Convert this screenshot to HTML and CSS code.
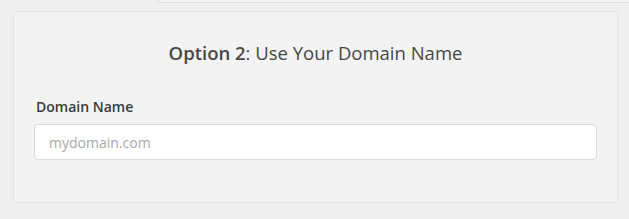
FILE: index.html
```html
<!DOCTYPE html>
<html>
<head>
<meta charset="UTF-8">
<meta name="viewport" content="width=device-width, initial-scale=1.0">
<title>Use Your Domain</title>
<link rel="stylesheet" href="styles.css">
</head>
<body>
<div class="prev-box"></div>
<div class="option-card">
  <h3 class="option-title"><strong>Option 2</strong>: Use Your Domain Name</h3>
  <div class="input-group">
    <label for="domain">Domain Name</label>
    <input type="text" id="domain" name="domain" placeholder="mydomain.com">
  </div>
</div>
</body>
</html>
```

FILE: styles.css
```css
body {
  font-family: "Open Sans", "Noto Sans", sans-serif;
  background-color: #efefef;
  margin: 0;
  padding: 0;
  color: #444;
}

.prev-box {
  margin-left: 157px;
  height: 2px;
  background-color: #f6f6f6;
  border-left: 1px solid #dedede;
  border-bottom: 1px solid #dedede;
  border-bottom-left-radius: 4px;
}

.option-card {
  margin: 8px 11px 0 13px;
  background-color: #f3f3f3;
  border: 1px solid #e3e3e3;
  border-radius: 4px;
  padding: 27px 20px 42px 20px;
}

.option-title {
  margin: 0 0 32px 0;
  text-align: center;
  font-size: 18.5px;
  font-weight: normal;
  line-height: 27px;
  color: #474747;
}

.option-title strong {
  font-weight: 600;
}

.input-group label {
  display: block;
  font-size: 14px;
  font-weight: 600;
  line-height: 18px;
  margin-bottom: 8px;
  margin-left: 2px;
  color: #3a3a3a;
}

.input-group input[type="text"] {
  box-sizing: border-box;
  width: 100%;
  height: 36px;
  padding: 0 14px;
  font-family: inherit;
  font-size: 14px;
  border: 1px solid #d9d9d9;
  border-radius: 4px;
  background-color: #fff;
}

.input-group input::placeholder {
  color: #a8a8a8;
}
```
